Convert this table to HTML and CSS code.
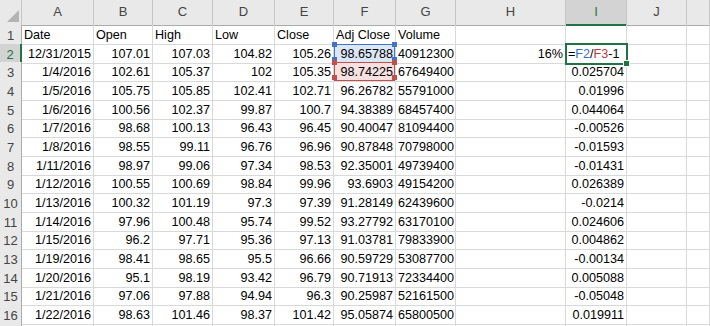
FILE: index.html
```html
<!DOCTYPE html>
<html lang="en">
<head>
  <meta charset="UTF-8" />
  <title>Book1 - Excel</title>
  <link rel="stylesheet" href="styles.css">
</head>
<body>
  <div class="sheet">
    <div class="row head">
      <div class="corner"><svg width="22" height="25" viewBox="0 0 22 25"><polygon points="19,10 19,22 7,22" fill="#b4b4b4"/></svg></div>
      <div class="ch">A</div><div class="ch">B</div><div class="ch">C</div><div class="ch">D</div><div class="ch">E</div>
      <div class="ch">F</div><div class="ch">G</div><div class="ch">H</div><div class="ch sel">I</div><div class="ch">J</div><div class="ch"></div>
    </div>
    <div class="row">
      <div class="rh">1</div><div class="c t">Date</div><div class="c t">Open</div><div class="c t">High</div><div class="c t">Low</div><div class="c t">Close</div>
      <div class="c t">Adj Close</div><div class="c t">Volume</div><div class="c"></div><div class="c"></div><div class="c"></div><div class="c"></div>
    </div>
    <div class="row">
      <div class="rh sel">2</div><div class="c">12/31/2015</div><div class="c">107.01</div><div class="c">107.03</div><div class="c">104.82</div><div class="c">105.26</div>
      <div class="c ref-blue">98.65788</div><div class="c">40912300</div><div class="c">16%</div>
      <div class="c t active"><span>=</span><span class="blue">F2</span><span>/</span><span class="red">F3</span><span>-1</span></div><div class="c"></div><div class="c"></div>
    </div>
    <div class="row">
      <div class="rh">3</div><div class="c">1/4/2016</div><div class="c">102.61</div><div class="c">105.37</div><div class="c">102</div><div class="c">105.35</div>
      <div class="c ref-red">98.74225</div><div class="c">67649400</div><div class="c"></div><div class="c">0.025704</div><div class="c"></div><div class="c"></div>
    </div>
    <div class="row">
      <div class="rh">4</div><div class="c">1/5/2016</div><div class="c">105.75</div><div class="c">105.85</div><div class="c">102.41</div><div class="c">102.71</div>
      <div class="c">96.26782</div><div class="c">55791000</div><div class="c"></div><div class="c">0.01996</div><div class="c"></div><div class="c"></div>
    </div>
    <div class="row">
      <div class="rh">5</div><div class="c">1/6/2016</div><div class="c">100.56</div><div class="c">102.37</div><div class="c">99.87</div><div class="c">100.7</div>
      <div class="c">94.38389</div><div class="c">68457400</div><div class="c"></div><div class="c">0.044064</div><div class="c"></div><div class="c"></div>
    </div>
    <div class="row">
      <div class="rh">6</div><div class="c">1/7/2016</div><div class="c">98.68</div><div class="c">100.13</div><div class="c">96.43</div><div class="c">96.45</div>
      <div class="c">90.40047</div><div class="c">81094400</div><div class="c"></div><div class="c">-0.00526</div><div class="c"></div><div class="c"></div>
    </div>
    <div class="row">
      <div class="rh">7</div><div class="c">1/8/2016</div><div class="c">98.55</div><div class="c">99.11</div><div class="c">96.76</div><div class="c">96.96</div>
      <div class="c">90.87848</div><div class="c">70798000</div><div class="c"></div><div class="c">-0.01593</div><div class="c"></div><div class="c"></div>
    </div>
    <div class="row">
      <div class="rh">8</div><div class="c">1/11/2016</div><div class="c">98.97</div><div class="c">99.06</div><div class="c">97.34</div><div class="c">98.53</div>
      <div class="c">92.35001</div><div class="c">49739400</div><div class="c"></div><div class="c">-0.01431</div><div class="c"></div><div class="c"></div>
    </div>
    <div class="row">
      <div class="rh">9</div><div class="c">1/12/2016</div><div class="c">100.55</div><div class="c">100.69</div><div class="c">98.84</div><div class="c">99.96</div>
      <div class="c">93.6903</div><div class="c">49154200</div><div class="c"></div><div class="c">0.026389</div><div class="c"></div><div class="c"></div>
    </div>
    <div class="row">
      <div class="rh">10</div><div class="c">1/13/2016</div><div class="c">100.32</div><div class="c">101.19</div><div class="c">97.3</div><div class="c">97.39</div>
      <div class="c">91.28149</div><div class="c">62439600</div><div class="c"></div><div class="c">-0.0214</div><div class="c"></div><div class="c"></div>
    </div>
    <div class="row">
      <div class="rh">11</div><div class="c">1/14/2016</div><div class="c">97.96</div><div class="c">100.48</div><div class="c">95.74</div><div class="c">99.52</div>
      <div class="c">93.27792</div><div class="c">63170100</div><div class="c"></div><div class="c">0.024606</div><div class="c"></div><div class="c"></div>
    </div>
    <div class="row">
      <div class="rh">12</div><div class="c">1/15/2016</div><div class="c">96.2</div><div class="c">97.71</div><div class="c">95.36</div><div class="c">97.13</div>
      <div class="c">91.03781</div><div class="c">79833900</div><div class="c"></div><div class="c">0.004862</div><div class="c"></div><div class="c"></div>
    </div>
    <div class="row">
      <div class="rh">13</div><div class="c">1/19/2016</div><div class="c">98.41</div><div class="c">98.65</div><div class="c">95.5</div><div class="c">96.66</div>
      <div class="c">90.59729</div><div class="c">53087700</div><div class="c"></div><div class="c">-0.00134</div><div class="c"></div><div class="c"></div>
    </div>
    <div class="row">
      <div class="rh">14</div><div class="c">1/20/2016</div><div class="c">95.1</div><div class="c">98.19</div><div class="c">93.42</div><div class="c">96.79</div>
      <div class="c">90.71913</div><div class="c">72334400</div><div class="c"></div><div class="c">0.005088</div><div class="c"></div><div class="c"></div>
    </div>
    <div class="row">
      <div class="rh">15</div><div class="c">1/21/2016</div><div class="c">97.06</div><div class="c">97.88</div><div class="c">94.94</div><div class="c">96.3</div>
      <div class="c">90.25987</div><div class="c">52161500</div><div class="c"></div><div class="c">-0.05048</div><div class="c"></div><div class="c"></div>
    </div>
    <div class="row">
      <div class="rh">16</div><div class="c">1/22/2016</div><div class="c">98.63</div><div class="c">101.46</div><div class="c">98.37</div><div class="c">101.42</div>
      <div class="c">95.05874</div><div class="c">65800500</div><div class="c"></div><div class="c">0.019911</div><div class="c"></div><div class="c"></div>
    </div>
    <div class="row">
      <div class="rh"></div><div class="c"></div><div class="c"></div><div class="c"></div><div class="c"></div><div class="c"></div>
      <div class="c"></div><div class="c"></div><div class="c"></div><div class="c"></div><div class="c"></div><div class="c"></div>
    </div>
  </div>
</body>
</html>
```

FILE: styles.css
```css
body {
  margin: 0;
  background: #fff;
  font-family: 'Liberation Sans', Arial, sans-serif;
  overflow: hidden;
}

.sheet {
  width: 710px;
  height: 326px;
  overflow: hidden;
}

.row {
  display: grid;
  grid-template-columns: 22px 72px 59px 60px 62px 59px 62px 60px 110px 61px 60px 1fr;
  height: 18.67px;
}

.row > div {
  box-sizing: border-box;
  border-right: 1px solid #d9d9d9;
  border-bottom: 1px solid #d9d9d9;
  overflow: visible;
  white-space: nowrap;
  position: relative;
}

/* column letters */
.head {
  height: 25px;
  background: #e9e9e9;
}

.head > div {
  border-right-color: #c6c6c6;
  border-bottom: 1px solid #ababab;
}

.corner svg {
  display: block;
}

.ch {
  text-align: center;
  font-size: 13px;
  line-height: 24px;
  color: #444;
}

.ch.sel {
  background: #d3d3d3;
  border-bottom: 2px solid #217346 !important;
  color: #217346;
}

/* row numbers */
.rh {
  background: #e9e9e9;
  border-right-color: #ababab !important;
  border-bottom-color: #c6c6c6 !important;
  text-align: center;
  font-size: 13px;
  line-height: 17px;
  padding-top: 2px;
  color: #444;
}

.rh.sel {
  background: #d3d3d3;
  border-right: 2px solid #217346 !important;
  color: #217346;
}

/* cells */
.c {
  font-size: 12.6px;
  line-height: 17px;
  padding: 2px 2px 0 2px;
  text-align: right;
  color: #000;
}

.c.t {
  text-align: left;
}

.ref-blue {
  background: #dce7f5;
  box-shadow: inset 0 0 0 1px #4472c4;
}

.ref-red {
  background: #f6e0e0;
  box-shadow: inset 0 0 0 1px #c0504d;
}

.ref-blue::before,
.ref-blue::after,
.ref-red::before,
.ref-red::after {
  content: '';
  position: absolute;
  top: -2px;
  width: 5px;
  height: 5px;
  background: #4472c4;
  box-shadow: 0 15px 0 #4472c4;
}

.ref-red::before,
.ref-red::after {
  background: #c0504d;
  box-shadow: 0 15px 0 #c0504d;
}

.ref-blue::before,
.ref-red::before {
  left: -2px;
}

.ref-blue::after,
.ref-red::after {
  right: -2px;
}

.active {
  outline: 2px solid #217346;
  outline-offset: -1px;
  z-index: 2;
}

.active::after {
  content: '';
  position: absolute;
  right: -4px;
  bottom: -4px;
  width: 5px;
  height: 5px;
  background: #217346;
  border: 1px solid #fff;
}

.blue {
  color: #3c6ec8;
}

.red {
  color: #c0393b;
}
```
